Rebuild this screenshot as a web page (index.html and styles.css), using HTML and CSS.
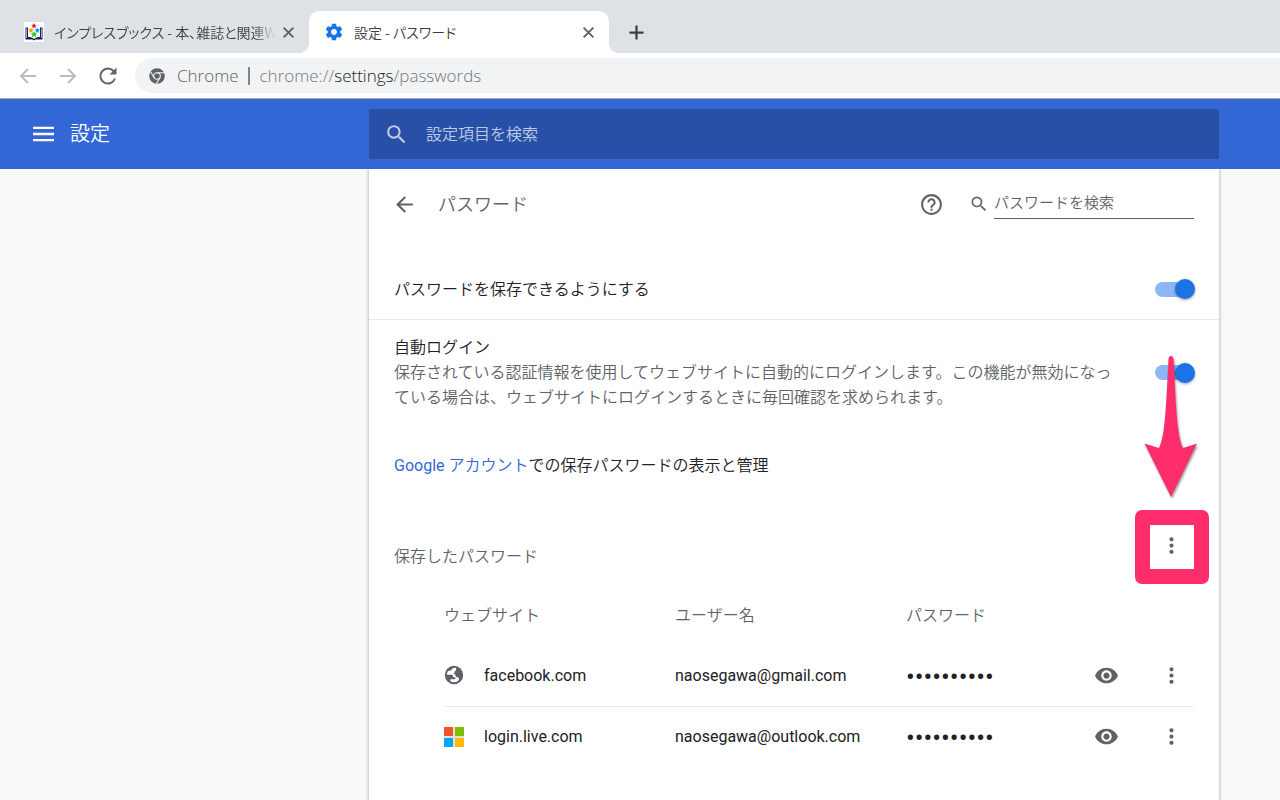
FILE: index.html
```html
<!DOCTYPE html>
<html lang="ja">
<head>
<meta charset="utf-8">
<meta name="viewport" content="width=device-width, initial-scale=1">
<title>設定 - パスワード</title>
<link rel="stylesheet" href="styles.css">
</head>
<body>
<svg class="defs" aria-hidden="true">
  <symbol id="search" viewBox="0 0 24 24"><path d="M15.5 14h-.79l-.28-.27A6.47 6.47 0 0 0 16 9.5 6.5 6.5 0 1 0 9.5 16c1.61 0 3.09-.59 4.23-1.57l.27.28v.79l5 4.99L20.49 19l-4.99-5zm-6 0C7.01 14 5 11.99 5 9.5S7.01 5 9.5 5 14 7.01 14 9.5 11.99 14 9.5 14z"/></symbol>
  <symbol id="dots" viewBox="0 0 24 24"><path d="M12 8c1.1 0 2-.9 2-2s-.9-2-2-2-2 .9-2 2 .9 2 2 2zm0 2c-1.1 0-2 .9-2 2s.9 2 2 2 2-.9 2-2-.9-2-2-2zm0 6c-1.1 0-2 .9-2 2s.9 2 2 2 2-.9 2-2-.9-2-2-2z"/></symbol>
  <symbol id="eye" viewBox="0 0 24 24"><path d="M12 4.5C7 4.5 2.73 7.61 1 12c1.73 4.39 6 7.5 11 7.5s9.27-3.11 11-7.5c-1.73-4.39-6-7.5-11-7.5zM12 17c-2.76 0-5-2.24-5-5s2.24-5 5-5 5 2.24 5 5-2.24 5-5 5zm0-8c-1.66 0-3 1.34-3 3s1.34 3 3 3 3-1.34 3-3-1.34-3-3-3z"/></symbol>
  <symbol id="back" viewBox="0 0 24 24"><path d="M20 11H7.83l5.59-5.59L12 4l-8 8 8 8 1.41-1.41L7.83 13H20v-2z"/></symbol>
  <symbol id="close" viewBox="0 0 12 12"><path d="M1.500 1.500l9 9m0-9l-9 9" fill="none" stroke="currentColor" stroke-width="1.800"/></symbol>
</svg>

<header class="browser">
  <div class="tabs" role="tablist">
    <div class="tab" role="tab" aria-selected="false">
      <svg class="favicon" viewBox="0 0 20 20" aria-hidden="true">
        <path fill="#fff" d="M0 0h20v20H0z"/>
        <path fill="#13235b" d="M1.500 5.500H4V15c2.500 0 4.500.5 6 2 1.500-1.500 3.500-2 6-2V5.500h2.500v12h-7L10 18.500l-1.500-1h-7z"/>
        <path fill="#fff" d="M4 5h12v9.500c-2.500 0-4.500.5-6 2-1.500-1.500-3.500-2-6-2zM2.300 6.500h.6V16h-.6zm14.800 0h.6V16h-.6z"/>
        <path fill="#d8192b" d="M10 1l.8 1.800 2 .2-1.500 1.300.5 2L10 5.300l-1.800 1 .5-2L7.200 3l2-.2z"/>
        <path fill="#ff9416" d="M7 5.500l.8 1.800 2 .2-1.500 1.400.5 2L7 9.900l-1.800 1 .5-2-1.500-1.400 2-.2z"/>
        <path fill="#1c95ee" d="M13.300 5.500l.8 1.800 2 .2-1.500 1.400.5 2-1.800-1-1.800 1 .5-2-1.500-1.400 2-.2z"/>
        <path fill="#35c51e" d="M10 9l1 2.200 2.400.2-1.800 1.600.6 2.400L10 14.100l-2.200 1.300.6-2.400-1.800-1.600 2.400-.2z"/>
      </svg>
      <span class="tab-title fade">インプレスブックス - 本、雑誌と関連W</span>
      <button class="tab-close" aria-label="閉じる"><svg><use href="#close"/></svg></button>
    </div>
    <div class="tab active" role="tab" aria-selected="true">
      <svg class="favicon gear" viewBox="0 0 24 24" aria-hidden="true"><path d="M19.430 12.980c.04-.32.07-.64.07-.98s-.03-.66-.07-.98l2.110-1.650c.19-.15.24-.42.12-.64l-2-3.460c-.12-.22-.39-.3-.61-.22l-2.490 1c-.52-.4-1.080-.73-1.690-.98l-.38-2.650A.488.488 0 0 0 14 2h-4c-.25 0-.46.18-.49.42l-.38 2.650c-.61.25-1.170.59-1.690.98l-2.490-1c-.23-.09-.49 0-.61.22l-2 3.460c-.13.22-.07.49.12.64l2.110 1.650c-.04.32-.07.65-.07.98s.03.66.07.98l-2.110 1.650c-.19.15-.24.42-.12.64l2 3.460c.12.22.39.3.61.22l2.490-1c.52.4 1.080.73 1.690.98l.38 2.650c.03.24.24.42.49.42h4c.25 0 .46-.18.49-.42l.38-2.650c.61-.25 1.170-.59 1.690-.98l2.490 1c.23.09.49 0 .61-.22l2-3.460c.12-.22.07-.49-.12-.64l-2.110-1.650zM12 15.500c-1.930 0-3.500-1.570-3.500-3.500s1.570-3.500 3.500-3.500 3.500 1.570 3.500 3.500-1.570 3.500-3.500 3.500z"/></svg>
      <span class="tab-title">設定 - パスワード</span>
      <button class="tab-close" aria-label="閉じる"><svg><use href="#close"/></svg></button>
    </div>
    <button class="new-tab" aria-label="新しいタブ"><svg viewBox="0 0 16 16"><path d="M8 .5v15M.5 8h15" fill="none" stroke="currentColor" stroke-width="2.400"/></svg></button>
  </div>
  <div class="toolbar">
    <div class="nav">
      <button class="dim" aria-label="戻る"><svg viewBox="0 0 20 20"><path d="M18 10H3m7-7l-7 7 7 7" fill="none" stroke="currentColor" stroke-width="2"/></svg></button>
      <button class="dim" aria-label="進む"><svg viewBox="0 0 20 20"><path d="M2 10h15m-7-7l7 7-7 7" fill="none" stroke="currentColor" stroke-width="2"/></svg></button>
      <button aria-label="再読み込み"><svg viewBox="0 0 20 20"><path d="M17 12.500A7.500 7.500 0 1 1 15.500 5" fill="none" stroke="currentColor" stroke-width="2"/><path d="M18.500 1.500v7h-7z" fill="currentColor"/></svg></button>
    </div>
    <div class="omnibox">
      <svg class="chrome" viewBox="0 0 16 16" aria-hidden="true"><circle cx="8" cy="8" r="7.800" fill="#5f6368"/><circle cx="8" cy="8" r="3.300" fill="none" stroke="#f1f3f4" stroke-width="1.100"/><path d="M8 4.700h7.200M5.100 9.700L1.600 3.800M10.900 9.700L7.300 15.800" stroke="#f1f3f4" stroke-width="1.100"/></svg>
      <span class="site">Chrome</span>
      <span class="url">chrome://<b>settings</b>/passwords</span>
    </div>
  </div>
</header>

<header class="bar columns">
  <div class="brand">
    <button aria-label="メインメニュー"><svg viewBox="0 0 22 16"><path d="M0 1.500h22M0 8h22M0 14.500h22" stroke="currentColor" stroke-width="2.400"/></svg></button>
    <h1>設定</h1>
  </div>
  <label class="main-search">
    <svg aria-hidden="true"><use href="#search"/></svg>
    <input type="search" placeholder="設定項目を検索" aria-label="設定項目を検索">
  </label>
</header>

<main class="columns page">
  <div class="card">
    <div class="head">
      <button aria-label="戻る"><svg><use href="#back"/></svg></button>
      <h2>パスワード</h2>
      <button class="help" aria-label="ヘルプ"><svg viewBox="0 0 24 24"><path d="M11 18h2v-2h-2v2zm1-16C6.480 2 2 6.480 2 12s4.480 10 10 10 10-4.480 10-10S17.520 2 12 2zm0 18c-4.410 0-8-3.590-8-8s3.590-8 8-8 8 3.590 8 8-3.590 8-8 8zm0-14c-2.210 0-4 1.790-4 4h2c0-1.100.9-2 2-2s2 .9 2 2c0 2-3 1.750-3 5h2c0-2.250 3-2.500 3-5 0-2.210-1.790-4-4-4z"/></svg></button>
      <label class="search"><svg aria-hidden="true"><use href="#search"/></svg><input type="search" placeholder="パスワードを検索" aria-label="パスワードを検索"></label>
    </div>
    <div class="row">
      <label for="save">パスワードを保存できるようにする</label>
      <input class="switch" type="checkbox" id="save" checked>
    </div>
    <div class="row login">
      <div>
        <label for="auto">自動ログイン</label>
        <p>保存されている認証情報を使用してウェブサイトに自動的にログインします。この機能が無効になっている場合は、ウェブサイトにログインするときに毎回確認を求められます。</p>
      </div>
      <input class="switch" type="checkbox" id="auto" checked>
    </div>
    <p class="account"><a href="#"><span class="latin">Google</span> アカウント</a>での保存パスワードの表示と管理</p>
    <div class="section">
      <h3>保存したパスワード</h3>
      <div class="target">
        <button aria-label="その他の操作"><svg><use href="#dots"/></svg></button>
        <span class="frame"></span>
        <svg class="arrow" viewBox="0 0 54 144" aria-hidden="true"><path d="M24.500 3Q24.800 0 27 0t2.500 3C32 52 33 80 39 92l14-4.500L27 141 .5 87.500 15 92C21 80 22 52 24.500 3z"/></svg>
      </div>
    </div>
    <table>
      <colgroup><col class="wide"><col class="wide"><col><col class="view"><col class="more"></colgroup>
      <thead><tr><th>ウェブサイト</th><th>ユーザー名</th><th>パスワード</th><td></td><td></td></tr></thead>
      <tbody>
        <tr>
          <td><div class="site-cell"><svg viewBox="0 0 20 20" aria-hidden="true"><circle cx="10" cy="10" r="9.200" fill="#5f6368"/><path fill="#fff" d="M11.800 2.700C8.800 2.600 7.600 3.500 7.500 5.200c-1.700.1-2.900.5-3.900 1.500L2.700 9.300c1.200.7 3.300.5 4.800.5 1.400 0 1.500.6 1.500 1.500.1 1 1 1.100 2 1.200.7.100.8.900.2 1.400-.9.600-2.800.5-4.700.2v2.300c3.300 1.200 6.400.9 7.800-.8 1-1.200.8-2.400 0-3.200-.6-.6-1.700-.4-2.200-.7-.6-.3-.4-1-.7-1.700-.4-.9-1.200-1.300-2.400-1.400 1.200-.3 1.600-.9 1.700-1.900.1-.8.500-1.200 1.500-1.300z"/></svg>facebook.com</div></td>
          <td>naosegawa@gmail.com</td>
          <td class="secret">••••••••••</td>
          <td class="act"><button aria-label="パスワードを表示"><svg class="eye"><use href="#eye"/></svg></button></td>
          <td class="act"><button aria-label="その他の操作"><svg><use href="#dots"/></svg></button></td>
        </tr>
        <tr>
          <td><div class="site-cell"><svg viewBox="0 0 20 20" aria-hidden="true"><path fill="#e2e2dc" d="M0 0h20v20H0z"/><path fill="#f35325" d="M0 0h9v9H0z"/><path fill="#81bc06" d="M11 0h9v9h-9z"/><path fill="#05a6f0" d="M0 11h9v9H0z"/><path fill="#ffba08" d="M11 11h9v9h-9z"/></svg>login.live.com</div></td>
          <td>naosegawa@outlook.com</td>
          <td class="secret">••••••••••</td>
          <td class="act"><button aria-label="パスワードを表示"><svg class="eye"><use href="#eye"/></svg></button></td>
          <td class="act"><button aria-label="その他の操作"><svg><use href="#dots"/></svg></button></td>
        </tr>
      </tbody>
    </table>
  </div>
</main>
</body>
</html>
```
FILE: styles.css
```css
* { box-sizing: border-box; }
body {
  margin: 0;
  min-height: 100vh;
  display: flex;
  flex-direction: column;
  overflow-x: hidden;
  background: #f8f9fb;
  color: #202124;
  font: 350 16px/25px Roboto, "Noto Sans CJK JP", sans-serif;
}
h1, h2, h3, p { margin: 0; font-weight: 350; }
button {
  display: grid;
  place-items: center;
  padding: 0;
  border: 0;
  background: none;
  color: #5f6368;
  cursor: pointer;
}
svg { fill: currentColor; flex: none; }
.defs { display: none; }
input { font: inherit; }
input[type="search"] { appearance: none; border: 0; border-radius: 0; padding: 0; background: none; outline: none; min-width: 0; }
.latin { font-weight: 400; }

/* Browser frame */
.tabs { display: flex; align-items: flex-end; height: 53px; padding-left: 9px; background: #dee1e6; }
.tab { position: relative; display: flex; align-items: center; width: 300px; height: 42px; padding: 0 14px 0 15px; color: #3c4043; }
.tab.active { background: #fff; border-radius: 10px 10px 0 0; }
.tab.active::before, .tab.active::after { content: ""; position: absolute; bottom: 0; width: 10px; height: 10px; }
.tab.active::before { right: 100%; background: radial-gradient(circle at 0 0, #dee1e6 10px, #fff 10px); }
.tab.active::after { left: 100%; background: radial-gradient(circle at 100% 0, #dee1e6 10px, #fff 10px); }
.favicon { width: 20px; height: 20px; }
.gear { color: #1a73e8; }
.tab-title { flex: 1; min-width: 0; margin: 0 6px 0 10px; white-space: nowrap; font: 350 14px/24px "Noto Sans CJK JP", sans-serif; font-feature-settings: "palt"; }
.fade { mask-image: linear-gradient(to right, #000 90%, transparent); }
.tab-close { width: 14px; height: 20px; }
.tab-close svg { width: 13px; height: 13px; }
.new-tab { width: 54px; height: 42px; color: #3c4043; }
.new-tab svg { width: 15px; height: 15px; }
.toolbar { display: flex; align-items: center; height: 46px; padding-left: 18px; background: #fff; border-bottom: 1px solid #a9a9ac; }
.nav { display: flex; gap: 20px; margin-right: 17px; }
.nav button { width: 20px; height: 24px; }
.nav svg { width: 20px; height: 20px; }
.nav .dim { color: #babcbe; }
.omnibox { flex: 1; display: flex; align-items: center; height: 35px; padding-left: 14px; border-radius: 18px 0 0 18px; background: #f1f3f4; color: #73797e; font: 350 17px/24px "Open Sans", sans-serif; }
.chrome { width: 16px; height: 16px; margin-right: 12px; }
.site { padding-right: 9px; border-right: 2px solid #80868b; color: #5f6368; line-height: 18px; }
.url { margin-left: 10px; }
.url b { font-weight: inherit; color: #202124; }

/* Settings header */
.columns { display: grid; grid-template-columns: 1fr minmax(0, 850px) 61px; }
.bar { height: 70px; background: #3367d6; color: #fff; }
.brand { display: flex; align-items: center; gap: 16px; padding-left: 33px; }
.brand button { color: #fff; }
.brand svg { width: 21px; height: 16px; }
.brand h1 { font-size: 20px; }
.main-search { display: flex; align-items: center; gap: 17px; height: 50px; margin-top: 10px; padding: 0 15px; border-radius: 2px; background: #2850a7; color: #bfcbe6; }
.main-search svg { width: 25px; height: 25px; }
.main-search input { flex: 1; color: #fff; }
.main-search input::placeholder { color: #bfcbe6; opacity: 1; }

/* Password page */
.page { flex: 1; }
.card { grid-column: 2; background: #fff; box-shadow: 0 1px 3px 1px rgb(60 64 67 / 30%); clip-path: inset(0 -6px); }
.head { display: flex; align-items: center; height: 70px; margin-bottom: 20px; padding: 0 25px 0 23px; color: #5f6368; }
.head button svg { width: 25px; height: 25px; }
.head h2 { flex: 1; margin-left: 21px; font-size: 18px; }
.search { display: flex; align-items: center; margin-left: 25px; gap: 5px; }
.search svg { width: 20px; height: 20px; }
.search input { width: 200px; height: 29px; padding-bottom: 2px; border-bottom: 1px solid #5f6368; font-size: 15px; }
.search input::placeholder { color: #5f6368; opacity: 1; }
.row { display: flex; align-items: center; justify-content: space-between; gap: 30px; min-height: 60px; padding: 0 24px 0 25px; }
.login { padding-top: 15px; padding-bottom: 16px; border-top: 1px solid #e8eaed; }
.row p { color: #5f6368; }
.switch { appearance: none; flex: none; display: flex; align-items: center; width: 40px; height: 20px; margin: 0; }
.switch::before { content: ""; width: 36px; height: 15px; border-radius: 8px; background: #8cb7f4; }
.switch::after { content: ""; flex: none; width: 20px; height: 20px; margin-left: -16px; border-radius: 50%; background: #1a73e8; box-shadow: 0 1px 3px rgb(0 0 0 / 40%); }
.account { padding: 27px 25px 0; }
a { color: #3367d6; text-decoration: none; }
.section { display: flex; align-items: center; justify-content: space-between; padding: 43px 25px 0; color: #5f6368; }
h3 { padding-top: 23px; font-size: 16px; }
.target { position: relative; }
.target button { width: 46px; height: 44px; }
button svg { width: 25px; height: 25px; }
.frame { position: absolute; left: -13px; top: -13px; width: 74px; height: 74px; border: 15px solid #ff2d6b; border-radius: 7px; pointer-events: none; }
.arrow { position: absolute; left: -4px; bottom: 67px; width: 54px; height: 144px; color: #ff2d6b; filter: drop-shadow(1px 2px 1px rgb(0 0 0 / 40%)); pointer-events: none; }
table { width: calc(100% - 100px); margin: 16px 25px 0 75px; border-collapse: collapse; table-layout: fixed; }
.wide { width: 231px; }
.view { width: 84px; }
.more { width: 46px; }
th, td { height: 61px; padding: 0; text-align: left; font-weight: 400; }
thead th, thead td { height: 60px; }
th { color: #5f6368; font-weight: 350; }
tbody tr + tr { border-top: 1px solid #e8eaed; }
.site-cell { display: flex; align-items: center; gap: 20px; }
.site-cell svg { width: 20px; height: 20px; }
.secret { padding-top: 4px; font-size: 26px; }
.act button { width: 100%; height: 40px; }
```
